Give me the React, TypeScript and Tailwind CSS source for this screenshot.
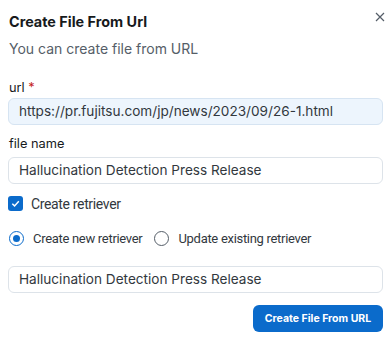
import * as React from "react"

const font = { fontFamily: "Inter, 'Noto Sans', sans-serif" }
const controlFont = { fontFamily: "Roboto, 'Noto Sans', sans-serif" }

function TextInput({ value, tinted = false }: { value: string; tinted?: boolean }) {
  return (
    <div
      className={
        "flex h-[27px] w-full items-center rounded-[6px] border px-[10px] text-[13.6px] text-[#32383e] " +
        (tinted ? "border-[#d6e4f2] bg-[#edf5fd]" : "border-[#dde3e9] bg-white")
      }
    >
      {value}
    </div>
  )
}

function Radio({ checked, label }: { checked?: boolean; label: string }) {
  return (
    <label
      className="flex items-center gap-[9px] text-[13px] leading-4 tracking-[-0.3px] text-[#32383e]"
      style={controlFont}
    >
      <span
        className={
          "flex h-[15px] w-[15px] items-center justify-center rounded-full border-[1.5px] " +
          (checked ? "border-[#0b6bcb]" : "border-[#555e68]")
        }
      >
        {checked ? <span className="h-[7px] w-[7px] rounded-full bg-[#0b6bcb]" /> : null}
      </span>
      {label}
    </label>
  )
}

export default function App() {
  return (
    <div className="relative h-[343px] w-[391px] bg-white px-2 pt-3" style={font}>
      <button className="absolute right-[4px] top-[10px] flex h-[14px] w-[14px] items-center justify-center text-[#555e68]">
        <svg width="10" height="10" viewBox="0 0 10 10" fill="none" stroke="currentColor" strokeWidth="1.2">
          <path d="M1 1 L9 9 M9 1 L1 9" />
        </svg>
      </button>

      <div className="pl-[1px] text-[14.4px] font-bold leading-5 text-[#171a1c]">Create File From Url</div>
      <div className="mt-[7px] pl-[1px] text-[14px] leading-5 text-[#555e68]">You can create file from URL</div>

      <div className="mt-[21px] pl-[1px] text-[12.8px] leading-4 text-[#171a1c]">
        url <span className="text-[#c41c1c]">*</span>
      </div>
      <div className="mt-[2px]">
        <TextInput tinted value="https://pr.fujitsu.com/jp/news/2023/09/26-1.html" />
      </div>

      <div className="mt-[11px] pl-[1px] text-[12.8px] leading-4 text-[#171a1c]">file name</div>
      <div className="mt-[5px]">
        <TextInput value="Hallucination Detection Press Release" />
      </div>

      <label
        className="mt-[12px] flex h-[15px] items-center gap-[8px] text-[14px] leading-4 tracking-[-0.35px] text-[#32383e]"
        style={controlFont}
      >
        <span className="flex h-[15px] w-[15px] items-center justify-center rounded-[3px] bg-[#0b6bcb]">
          <svg width="11" height="11" viewBox="0 0 12 12" fill="none" stroke="white" strokeWidth="1.6">
            <path d="M2.5 6.2 L5 8.6 L9.6 3.6" />
          </svg>
        </span>
        Create retriever
      </label>

      <div className="mt-[20px] flex h-[15px] items-center gap-[12px] pl-[1px]">
        <Radio checked label="Create new retriever" />
        <Radio label="Update existing retriever" />
      </div>

      <div className="mt-[20px]">
        <TextInput value="Hallucination Detection Press Release" />
      </div>

      <div className="mt-[12px] flex justify-end">
        <button className="flex h-[27px] w-[130px] items-center justify-center rounded-[6px] bg-[#0b6bcb] text-[10.5px] font-bold text-white">
          Create File From URL
        </button>
      </div>
    </div>
  )
}
